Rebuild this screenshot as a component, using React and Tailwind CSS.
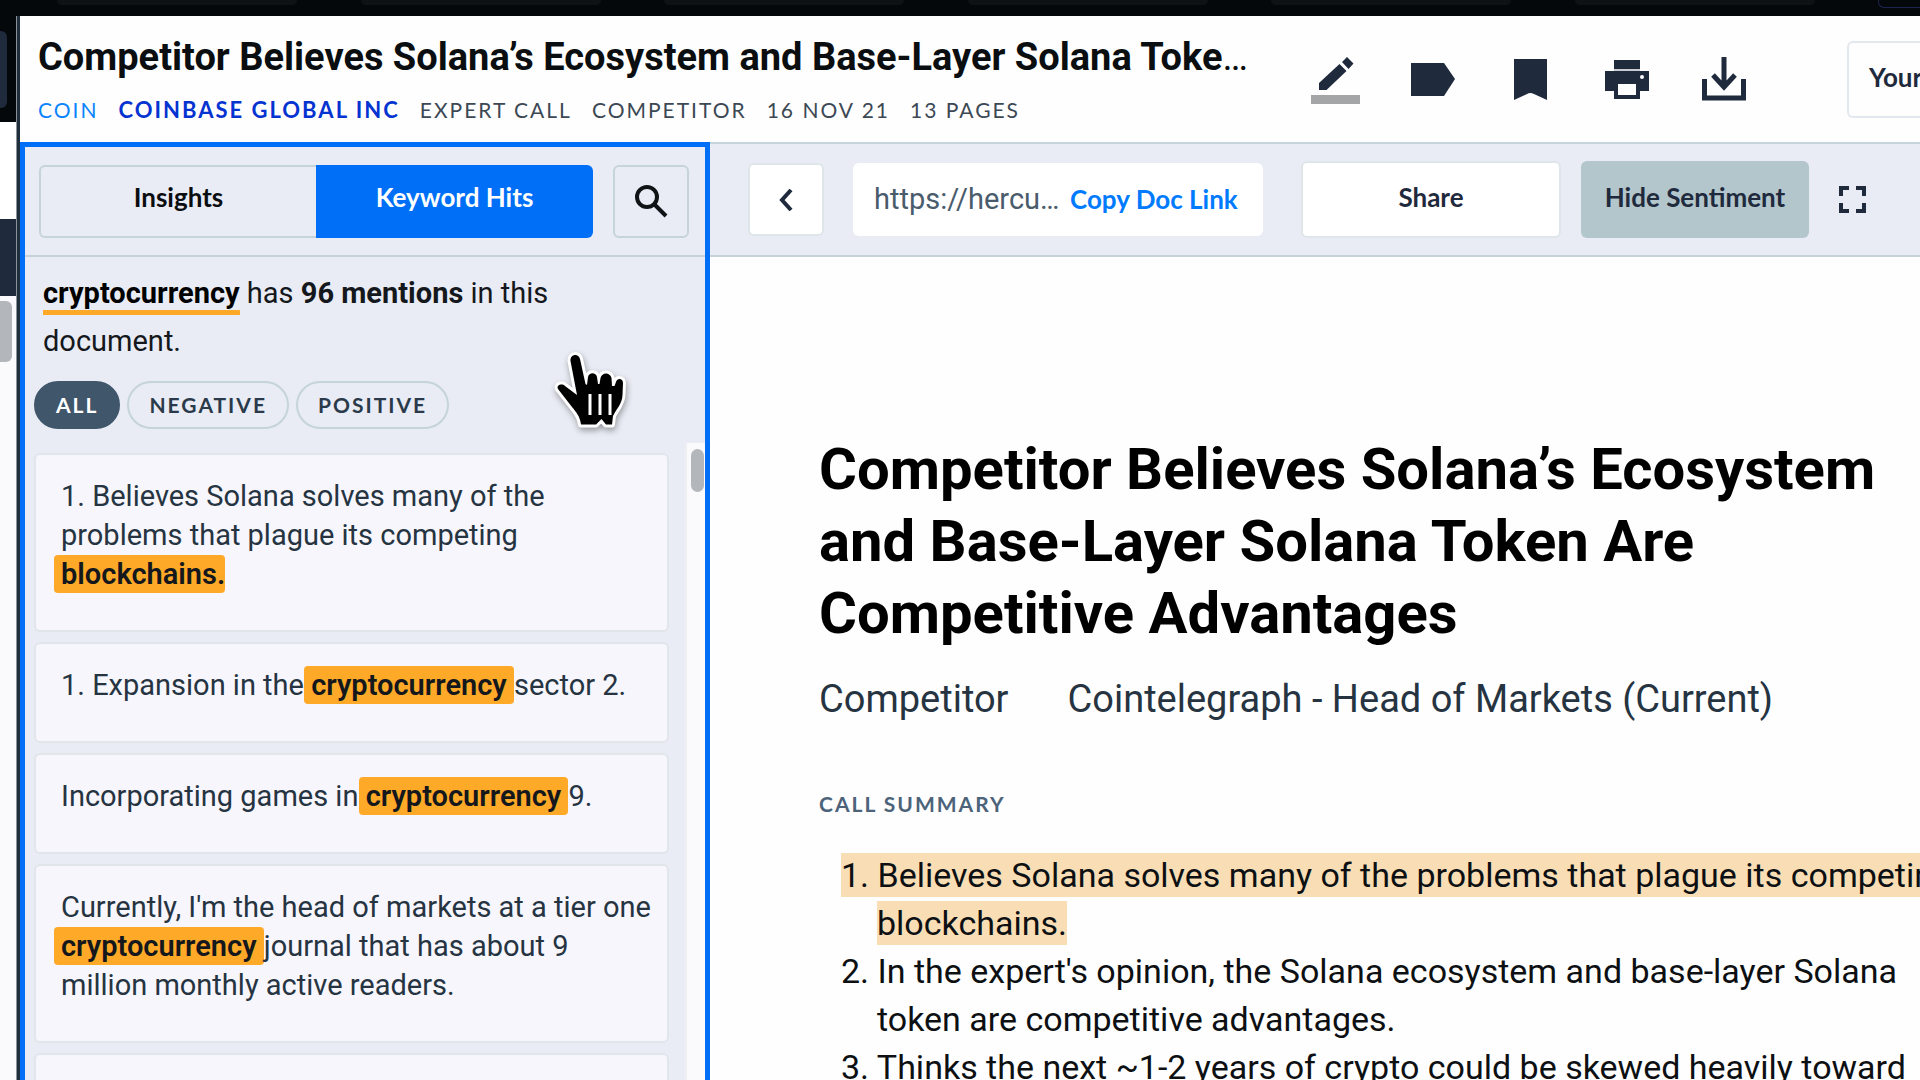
import { useState } from 'react'
import clsx from 'clsx'

const DOC_TITLE = 'Competitor Believes Solana’s Ecosystem and Base-Layer Solana Token Are Competitive Advantages'

const FILTERS = ['All', 'Negative', 'Positive']

const HITS = [
  { before: '1. Believes Solana solves many of the problems that plague its competing ', hit: 'blockchains.', after: '', last: true },
  { before: '1. Expansion in the ', hit: 'cryptocurrency', after: ' sector 2.' },
  { before: 'Incorporating games in ', hit: 'cryptocurrency', after: ' 9.' },
  { before: "Currently, I'm the head of markets at a tier one ", hit: 'cryptocurrency', after: ' journal that has about 9 million monthly active readers.' },
  { before: '', hit: '', after: '', last: true }
]

const SUMMARY = [
  { text: 'Believes Solana solves many of the problems that plague its competing blockchains.', marked: true },
  { text: "In the expert's opinion, the Solana ecosystem and base-layer Solana token are competitive advantages." },
  { text: 'Thinks the next ~1-2 years of crypto could be skewed heavily toward' }
]

function PencilIcon() {
  return (
    <svg width="50" height="50" viewBox="0 0 50 50" fill="#1f2a3d">
      <path d="M8 36v-7l20.500-19 7 7-20 19zM31 8l5-5 6.500 6.500-5 5.500z" />
      <rect x="0" y="41" width="49" height="9" fill="#a3a5a6" />
    </svg>
  )
}

function LabelIcon() {
  return (
    <svg width="44" height="33" viewBox="0 0 44 33" fill="#1f2a3d">
      <path d="M0 0h33l11 16-11 17H0z" />
    </svg>
  )
}

function BookmarkIcon() {
  return (
    <svg width="33" height="41" viewBox="0 0 33 41" fill="#1f2a3d">
      <path d="M0 0h33v41l-13-6q-4-2-7 0l-13 6z" />
    </svg>
  )
}

function PrintIcon() {
  return (
    <svg width="44" height="39" viewBox="0 0 44 39" fill="#1f2a3d">
      <path d="M9 9h26v2H9z" fill="#c9ccd2" />
      <path d="M9 0h26v9H9zM0 11h44v20h-9v8H9v-8H0zM13 24v11h18V24z" fillRule="evenodd" />
      <circle cx="37" cy="17" r="2" fill="#fff" />
    </svg>
  )
}

function DownloadIcon() {
  return (
    <svg width="44" height="44" viewBox="0 0 44 44" fill="none" stroke="#1f2a3d" strokeWidth="5">
      <path d="M22 0v28M11 18l11 12 11-12M2.500 22v19h39V22" />
    </svg>
  )
}

// Pointing hand that floats over the hits panel
function Cursor() {
  return (
    <svg
      className="pointer-events-none absolute top-[340px] left-[540px] drop-shadow-[1px_3px_3px_rgba(0,0,0,0.35)]"
      width="100"
      height="100"
      viewBox="0 0 100 100"
    >
      <path
        d="M30.500 21C30 14 38.500 13 40 19L45.500 44 47 45 48 37C49 32 56 32 57 37L58 44H59.500L60.500 38C62 32 70 32 71.500 38L72 46H74.500L76 42C77 38 83 38 83 43L82.500 55C82 64 77 68 73 76L72 84.500H66L61.500 79 56 84.500H41C40 76 36 72 32 67L18 49C16 45 22 43 25 46L37 55z"
        fill="#000"
        stroke="#fff"
        strokeWidth="6"
        strokeLinejoin="round"
        paintOrder="stroke"
      />
      <path d="M50 54v21M60 54v21M70 54v21" stroke="#fff" strokeWidth="3" />
    </svg>
  )
}

function HitCard({ item }) {
  return (
    <li className="min-h-[99px] shrink-0 rounded-md border-2 border-[#e1e6eb] bg-[#f6f6fc] pt-[22px] pr-4 pb-[36px] pl-[25px] text-[29px] leading-[39px] text-[#263442]">
      {item.before}
      {item.hit && (
        <mark
          className={clsx(
            '-ml-[7px] rounded-[4px] bg-[#ffa928] py-[2px] pl-[7px] font-semibold text-[#14181c]',
            !item.last && '-mr-[7px] pr-[7px]'
          )}
        >
          {item.hit}
        </mark>
      )}
      {item.after}
    </li>
  )
}

export default function App() {
  const [tab, setTab] = useState('hits')
  const [filter, setFilter] = useState('All')

  return (
    <div className="flex h-screen flex-col overflow-hidden bg-[#05080b] font-['Roboto',sans-serif]">
      {/* Bottom edge of the browser tabs */}
      <div className="flex h-4 shrink-0 items-start justify-between overflow-hidden pl-[57px]">
        {[1, 2, 3, 4, 5, 6].map(n => (
          <div key={n} className="h-[5px] w-[240px] rounded-b-xl bg-[#0e1215]" />
        ))}
        <div className="h-2 w-[42px] rounded-bl-md border-b border-l border-[#1c2450]" />
      </div>

      <div className="flex min-h-0 flex-1">
        {/* Page behind the viewer */}
        <div className="flex w-4 shrink-0 flex-col bg-[#fafafc]">
          <div className="h-[106px] bg-[#05080b] pt-[15px]">
            <div className="h-[77px] w-[7px] rounded-r-md bg-[#1f2a3d]" />
          </div>
          <div className="h-[97px] bg-white" />
          <div className="h-[77px] bg-[#1f2a3d]" />
          <div className="mt-[5px] h-[61px] w-3 rounded-r-md bg-[#b3b7bc]" />
        </div>
        <div className="w-1 shrink-0 border-l border-[#8b9296] bg-[#1f2f3d]" />

        <div className="flex min-w-0 flex-1 flex-col bg-[#fefefe]">
          {/* Header */}
          <header className="flex h-[126px] shrink-0 items-start pl-[18px]">
            <div className="min-w-0 flex-1 pt-[18px]">
              <h1 className="truncate text-[38px] leading-[46px] font-normal text-[#0b0e11]">
                <span className="font-bold">{DOC_TITLE}</span>
              </h1>
              <div className="mt-[17px] flex gap-5 font-['Lato',sans-serif] text-[21px] leading-[26px] tracking-[2px] whitespace-nowrap text-[#3c4854] uppercase">
                <a href="#coin" className="text-[#0a84ff]">Coin</a>
                <a href="#coinbase" className="text-[22px] font-bold text-[#0433d1]">Coinbase Global Inc</a>
                <span>Expert Call</span>
                <span>Competitor</span>
                <span>16 Nov 21</span>
                <span>13 Pages</span>
              </div>
            </div>
            <div className="ml-[60px] flex h-[126px] shrink-0 items-center gap-[47px]">
              <button aria-label="Highlight" className="flex w-[50px] justify-center"><PencilIcon /></button>
              <button aria-label="Tag" className="flex w-[50px] justify-center"><LabelIcon /></button>
              <button aria-label="Bookmark" className="flex w-[50px] justify-center"><BookmarkIcon /></button>
              <button aria-label="Print" className="flex w-[50px] justify-center"><PrintIcon /></button>
              <button aria-label="Download" className="flex w-[50px] justify-center"><DownloadIcon /></button>
            </div>
            <button className="mt-[25px] ml-[98px] h-[77px] w-[73px] shrink-0 overflow-hidden rounded-l-md border-2 border-r-0 border-[#e3e8ee] pb-1 pl-5 text-left font-['Lato',sans-serif] text-[26px] font-bold whitespace-nowrap text-[#1f2a3d]">
              Your
            </button>
          </header>

          <div className="flex min-h-0 flex-1">
            {/* Keyword hits */}
            <aside className="flex w-[690px] shrink-0 flex-col border-x-[5px] border-t-[5px] border-[#006ff7] bg-[#e9ecf4]">
              <div className="flex h-[110px] shrink-0 items-center gap-5 border-b-2 border-[#c5d3da] pr-4 pl-[14px]">
                <div className="flex h-[73px] flex-1 font-['Lato',sans-serif] text-[26px] font-bold">
                  <button
                    onClick={() => setTab('insights')}
                    className={clsx('w-1/2 rounded-l-md pb-2', tab === 'insights' ? 'bg-[#006ff7] text-white' : 'border-2 border-r-0 border-[#c5d3da] text-[#0b0e11]')}
                  >
                    Insights
                  </button>
                  <button
                    onClick={() => setTab('hits')}
                    className={clsx('w-1/2 rounded-r-md pb-2', tab === 'hits' ? 'bg-[#006ff7] text-white' : 'border-2 border-l-0 border-[#c5d3da] text-[#0b0e11]')}
                  >
                    Keyword Hits
                  </button>
                </div>
                <button aria-label="Search" className="flex h-[73px] w-[76px] items-center justify-center rounded-md border-2 border-[#c5d3da]">
                  <svg width="34" height="34" viewBox="0 0 34 34" fill="none" stroke="#111417" strokeWidth="4">
                    <circle cx="13" cy="13" r="10" />
                    <path d="M20 20l12 12" />
                  </svg>
                </button>
              </div>

              <p className="px-[18px] pt-3 text-[29px] leading-12 text-[#14181c]">
                <strong className="border-b-[5px] border-[#ffa928] text-black">cryptocurrency</strong> has <strong>96 mentions</strong> in this<br />document.
              </p>

              <div className="flex shrink-0 gap-[7px] px-[9px] pt-4 pb-[14px] font-['Lato',sans-serif] text-[21px] font-bold tracking-[2px] uppercase">
                {FILTERS.map(f => (
                  <button
                    key={f}
                    onClick={() => setFilter(f)}
                    className={clsx('h-12 rounded-full border-2 px-5 uppercase', filter === f ? 'border-[#40566b] bg-[#40566b] text-white' : 'border-[#c5d3da] text-[#2b3a4a]')}
                  >
                    {f}
                  </button>
                ))}
              </div>

              <div className="flex min-h-0 flex-1">
                <ul className="flex flex-1 flex-col gap-[10px] pt-[10px] pr-4 pl-[9px]">
                  {HITS.map((item, i) => <HitCard key={i} item={item} />)}
                </ul>
                <div className="w-5 shrink-0 border-l-2 border-[#eeeff3] bg-[#fafafc] pt-[6px] pl-1">
                  <div className="h-[43px] w-[13px] rounded-full bg-[#b3b7bc]" />
                </div>
              </div>
            </aside>

            {/* Document */}
            <main className="flex min-w-0 flex-1 flex-col overflow-hidden">
              <div className="flex h-[115px] shrink-0 items-center border-y-2 border-[#c5d3da] bg-[#e9ecf4] pl-[38px] font-['Lato',sans-serif] text-[26px] font-bold text-[#1f2a3d]">
                <button aria-label="Back" className="flex h-[73px] w-[76px] items-center justify-center rounded-md border-2 border-[#dfe6ea] bg-white">
                  <svg width="14" height="22" viewBox="0 0 14 22" fill="none" stroke="#1f2a3d" strokeWidth="4">
                    <path d="M12 1L3 11l9 10" />
                  </svg>
                </button>
                <div className="ml-[29px] flex h-[73px] w-[410px] items-center rounded-md bg-white pl-[21px]">
                  <span className="w-[196px] font-['Roboto',sans-serif] text-[29px] font-normal text-[#4a5c6c]">https://hercu…</span>
                  <button className="text-[#007bff]">Copy Doc Link</button>
                </div>
                <button className="ml-[38px] h-[77px] w-[260px] rounded-md border-2 border-[#dfe6ea] bg-white pb-1">Share</button>
                <button className="ml-5 h-[77px] w-[228px] rounded-md bg-[#b3c6cc] pb-1">Hide Sentiment</button>
                <button aria-label="Full screen" className="ml-[30px]">
                  <svg width="27" height="27" viewBox="0 0 27 27" fill="none" stroke="#1f2a3d" strokeWidth="4">
                    <path d="M2 10V2h8M17 2h8v8M25 17v8h-8M10 25H2v-8" />
                  </svg>
                </button>
              </div>

              <article className="w-[1249px] shrink-0 pt-[176px] pl-[109px]">
                <h2 className="text-[58px] leading-[72px] font-bold text-black">{DOC_TITLE}</h2>
                <p className="mt-[26px] flex gap-[59px] text-[38px] leading-[48px] text-[#263442]">
                  <span>Competitor</span>
                  <span>Cointelegraph - Head of Markets (Current)</span>
                </p>
                <h3 className="mt-[65px] font-['Lato',sans-serif] text-[21px] leading-[32px] font-bold tracking-[2px] text-[#4c637a] uppercase">Call Summary</h3>
                <ol className="mt-[31px] pl-[22px] text-[34px] leading-[48px] text-[#0d1013]">
                  {SUMMARY.map((item, i) => (
                    <li key={item.text} className="pl-9 -indent-9">
                      <span className={clsx(item.marked && 'bg-[#f9deb5] py-[2px]')}>{i + 1}. {item.text}</span>
                    </li>
                  ))}
                </ol>
              </article>
            </main>
          </div>
        </div>
      </div>

      <Cursor />
    </div>
  )
}
